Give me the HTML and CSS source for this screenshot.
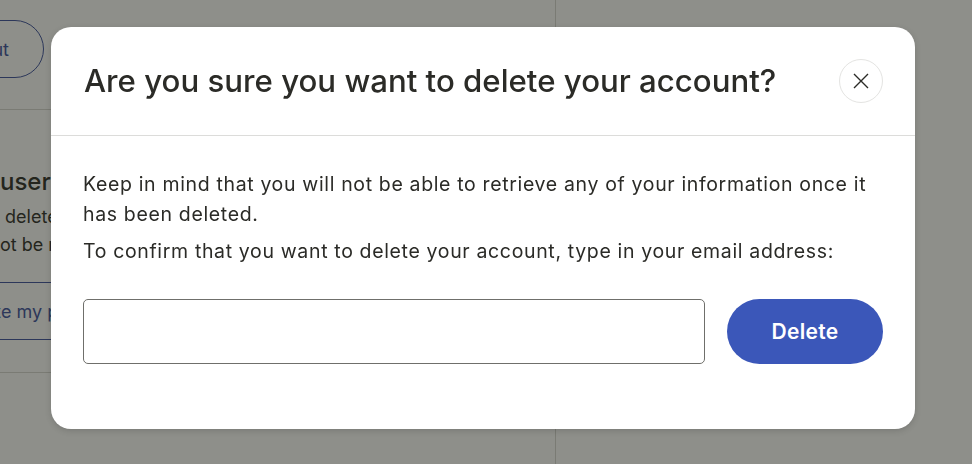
FILE: index.html
```html
<!DOCTYPE html>
<html lang="en">
<head>
  <meta charset="UTF-8">
  <meta name="viewport" content="width=device-width, initial-scale=1.0">
  <title>Account settings</title>
  <link rel="stylesheet" href="styles.css">
</head>
<body>
  <div class="page">
    <div class="settings">
      <div class="settings-top">
        <button class="outline-btn signout-btn">Sign out</button>
      </div>
      <div class="settings-section">
        <h3 class="line"><span class="pre">Delete </span>user</h3>
        <p class="line"><span class="pre">Once you</span> delete your profile, it</p>
        <p class="line"><span class="pre">can n</span>ot be restored later on.</p>
        <button class="outline-btn remove-btn line"><span class="pre">Delet</span>e my profile</button>
      </div>
    </div>
  </div>

  <div class="overlay">
    <div class="modal" role="dialog" aria-labelledby="modal-title">
      <div class="modal-header">
        <h2 id="modal-title">Are you sure you want to delete your account?</h2>
        <button class="close-btn" aria-label="Close">
          <svg width="18" height="18" viewBox="0 0 18 18">
            <path d="M2 2 L16 16 M16 2 L2 16" stroke="#2b2b27" stroke-width="1.4" fill="none"/>
          </svg>
        </button>
      </div>
      <div class="modal-body">
        <p>Keep in mind that you will not be able to retrieve any of your information once it has been deleted.</p>
        <p>To confirm that you want to delete your account, type in your email address:</p>
        <div class="confirm-row">
          <input type="email" class="confirm-input" aria-label="Email address">
          <button class="delete-btn">Delete</button>
        </div>
      </div>
    </div>
  </div>
</body>
</html>
```

FILE: styles.css
```css
body {
  margin: 0;
  font-family: 'Inter', 'Helvetica Neue', Arial, sans-serif;
  color: #2b2b27;
  background-color: #ffffff;
  height: 464px;
  overflow: hidden;
}
.page {
  display: flex;
  height: 464px;
}
.settings {
  width: 556px;
  height: 100%;
  border-right: 1px solid #d6d6d2;
  box-sizing: border-box;
  overflow: hidden;
}
.settings-top {
  height: 110px;
  border-bottom: 1px solid #d6d6d2;
  box-sizing: border-box;
  padding-top: 20px;
}
.outline-btn {
  font-family: inherit;
  font-size: 18px;
  color: #3b4f9e;
  background: none;
  border: 1px solid #3b4f9e;
  border-radius: 30px;
  cursor: pointer;
  white-space: nowrap;
}
.signout-btn {
  width: 150px;
  height: 58px;
  margin-left: -106px;
  padding: 0 34px 0 0;
  text-align: right;
}
.settings-section {
  height: 263px;
  border-bottom: 1px solid #d6d6d2;
  box-sizing: border-box;
  padding-top: 57px;
}
/* lines that run in from the left edge of the window */
.settings-section .line {
  margin-left: -120px;
  white-space: nowrap;
}
.line .pre {
  display: inline-block;
  width: 120px;
  text-align: right;
  white-space: pre;
}
.settings-section h3 {
  margin-top: 0;
  margin-bottom: 6px;
  font-size: 24px;
  font-weight: 500;
  line-height: 30px;
}
.settings-section p {
  margin-top: 0;
  margin-bottom: 0;
  font-size: 18px;
  line-height: 28px;
}
.remove-btn {
  display: block;
  margin-top: 23px;
  width: 420px;
  height: 58px;
  padding: 0;
  text-align: left;
}
.overlay {
  position: fixed;
  inset: 0;
  background-color: rgba(30, 32, 22, 0.5);
}
.modal {
  position: absolute;
  left: 51px;
  top: 27px;
  width: 864px;
  height: 402px;
  background-color: #ffffff;
  border-radius: 20px;
  box-shadow: 0 2px 6px rgba(0, 0, 0, 0.15);
  overflow: hidden;
}
.modal-header {
  height: 108px;
  display: flex;
  align-items: center;
  justify-content: space-between;
  padding: 0 32px 0 33px;
  border-bottom: 1px solid #dcdcda;
}
.modal-header h2 {
  margin: 0;
  font-size: 31.2px;
  font-weight: 500;
  white-space: nowrap;
}
.close-btn {
  flex: none;
  width: 44px;
  height: 44px;
  border-radius: 50%;
  border: 1px solid #e4e4e2;
  background: #ffffff;
  display: flex;
  align-items: center;
  justify-content: center;
  padding: 0;
  cursor: pointer;
}
.modal-body {
  padding: 33px 32px 0 32px;
}
.modal-body p {
  margin: 0 0 7px;
  font-size: 19.5px;
  letter-spacing: 0.65px;
  line-height: 30px;
  color: #2b2b27;
}
.confirm-row {
  display: flex;
  gap: 22px;
  margin-top: 33px;
}
.confirm-input {
  width: 622px;
  height: 65px;
  box-sizing: border-box;
  border: 1px solid #6f6f6b;
  border-radius: 5px;
  font-size: 18px;
  font-family: inherit;
  padding: 0 16px;
}
.delete-btn {
  width: 156px;
  height: 65px;
  border: none;
  border-radius: 33px;
  background-color: #3b57b9;
  color: #ffffff;
  font-family: inherit;
  font-size: 21px;
  font-weight: 600;
  letter-spacing: 0.3px;
  cursor: pointer;
}
```
